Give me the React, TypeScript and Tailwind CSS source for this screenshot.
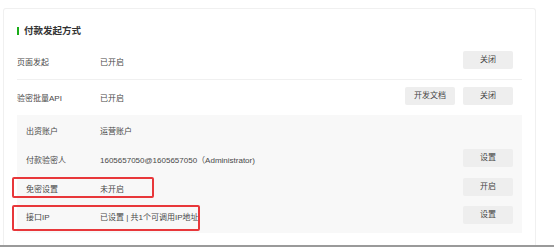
import React from "react";

const font = "font-['Liberation_Sans','Noto_Sans_CJK_SC',sans-serif]";

function Btn({ children }: { children: React.ReactNode }) {
  return (
    <button className="w-[50px] h-[18px] bg-[#eeeeee] rounded-[2px] text-[8px] leading-none text-[#444] flex items-center justify-center">
      {children}
    </button>
  );
}

interface RowProps {
  label: string;
  value: string;
  actions?: React.ReactNode;
  labelWidth: string;
  className?: string;
}

function Row({ label, value, actions, labelWidth, className = "" }: RowProps) {
  return (
    <div className={`flex items-center ${className}`}>
      <span className={`${labelWidth} shrink-0 text-[8px] text-[#484848] pt-[6px]`}>{label}</span>
      <span className="flex-1 text-[8px] text-[#484848] pt-[6px]">{value}</span>
      <div className="flex items-center gap-[8px]">{actions}</div>
    </div>
  );
}

export default function App() {
  return (
    <div className={`relative w-[554px] h-[247px] bg-white overflow-hidden flex flex-col ${font}`}>
      <div className="flex-1 pt-[8px] pl-[3px]">
        <div className="w-[533px] h-full border border-b-0 border-[#f0f0f0] rounded-t-[3px] bg-white px-[13px] pt-[16px]">
          {/* Title */}
          <div className="flex items-center h-[12px]">
            <span className="w-[2px] h-[8px] bg-[#1aad19]" />
            <span className="ml-[5px] text-[9.5px] font-bold text-[#333]">付款发起方式</span>
          </div>

          <Row
            label="页面发起"
            value="已开启"
            labelWidth="w-[83px]"
            className="h-[43px] border-b border-[#f0f0f0] pt-[4px] pr-[9px]"
            actions={<Btn>关闭</Btn>}
          />
          <Row
            label="验密批量API"
            value="已开启"
            labelWidth="w-[83px]"
            className="h-[31px] pr-[9px]"
            actions={
              <>
                <Btn>开发文档</Btn>
                <Btn>关闭</Btn>
              </>
            }
          />

          {/* Sub panel */}
          <div className="mt-[4px] bg-[#f8f8f8] pl-[9px] pr-[9px] pb-[3px]">
            <Row label="出资账户" value="运营账户" labelWidth="w-[74px]" className="h-[28.7px]" />
            <Row
              label="付款验密人"
              value="1605657050@1605657050（Administrator)"
              labelWidth="w-[74px]"
              className="h-[28.7px]"
              actions={<Btn>设置</Btn>}
            />
            <Row
              label="免密设置"
              value="未开启"
              labelWidth="w-[74px]"
              className="h-[28.7px]"
              actions={<Btn>开启</Btn>}
            />
            <Row
              label="接口IP"
              value="已设置 | 共1个可调用IP地址"
              labelWidth="w-[74px]"
              className="h-[28.7px]"
              actions={<Btn>设置</Btn>}
            />
          </div>
        </div>
      </div>
      <div className="h-[2px] bg-[#9a9a9a]" />

      {/* Annotation boxes */}
      <div className="absolute left-[12px] top-[177px] w-[142px] h-[21px] border-2 border-[#e8373a] rounded-[2px]" />
      <div className="absolute left-[12px] top-[205px] w-[188px] h-[26px] border-2 border-[#e8373a] rounded-[2px]" />
    </div>
  );
}
